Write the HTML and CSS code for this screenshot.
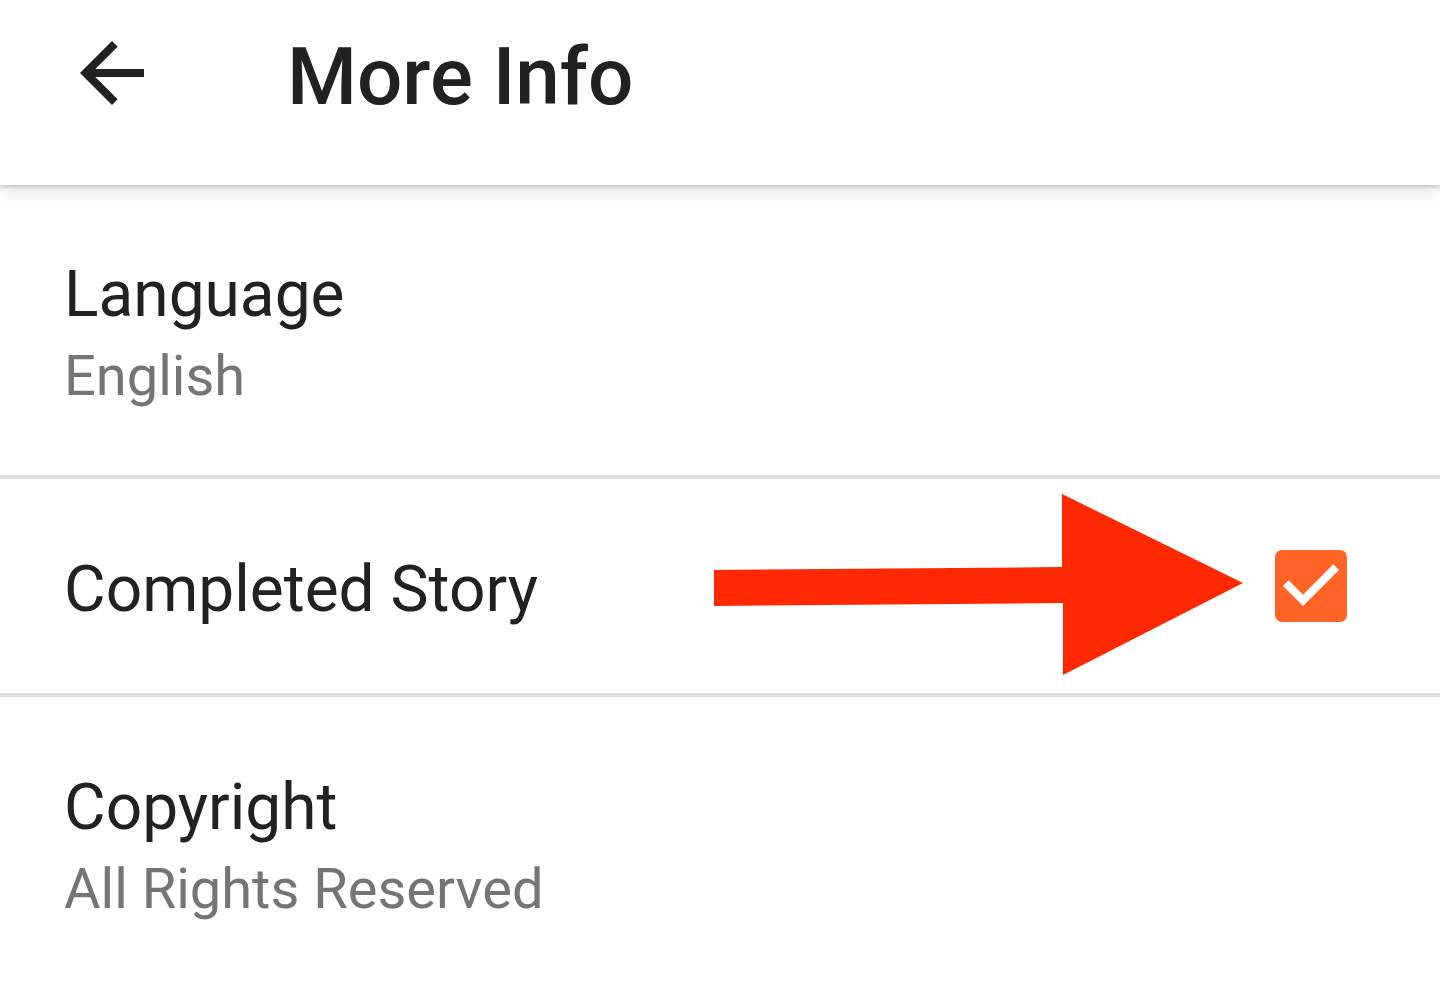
FILE: index.html
```html
<!DOCTYPE html>
<html lang="en">
<head>
<meta charset="utf-8">
<title>More Info</title>
<link rel="stylesheet" href="styles.css">
</head>
<body>
<div class="page">
  <header class="toolbar">
    <svg class="back-icon" viewBox="0 0 24 24" width="96" height="96" aria-hidden="true">
      <path d="M20 11H7.83l5.59-5.59L12 4l-8 8 8 8 1.41-1.41L7.83 13H20v-2z" fill="#212121"/>
    </svg>
    <h1 class="toolbar-title">More Info</h1>
  </header>

  <section class="row">
    <div class="row-text">
      <div class="row-title">Language</div>
      <div class="row-sub">English</div>
    </div>
  </section>
  <div class="divider"></div>

  <section class="row row-check">
    <div class="row-title">Completed Story</div>
    <div class="checkbox">
      <svg viewBox="0 0 72 72" width="72" height="72" aria-hidden="true">
        <path d="M28 56 8 36l5.64-5.64L28 44.68l30.36-30.36L64 20z" fill="#ffffff"/>
      </svg>
    </div>
  </section>
  <div class="divider"></div>

  <section class="row">
    <div class="row-text">
      <div class="row-title">Copyright</div>
      <div class="row-sub">All Rights Reserved</div>
    </div>
  </section>

  <svg class="annotation" viewBox="0 0 1440 1005" width="1440" height="1005" aria-hidden="true">
    <polygon points="714,570 1062,567 1062,494 1243,583 1063,675 1063,603 714,606" fill="#ff2800"/>
  </svg>
</div>
</body>
</html>
```

FILE: styles.css
```css
html, body {
  margin: 0;
  padding: 0;
  background: #ffffff;
}

body {
  width: 1440px;
  height: 1005px;
  overflow: hidden;
  font-family: Roboto, "Liberation Sans", sans-serif;
  color: #212121;
}

.page {
  position: relative;
  width: 1440px;
  height: 1005px;
  background: #ffffff;
}

.toolbar {
  position: relative;
  z-index: 2;
  height: 185px;
  box-sizing: border-box;
  display: flex;
  align-items: flex-start;
  background: #ffffff;
  box-shadow: 0 2px 4px rgba(0, 0, 0, 0.18), 0 6px 18px rgba(0, 0, 0, 0.1);
}

.back-icon {
  display: block;
  flex: none;
  margin: 25px 0 0 64px;
}

.toolbar-title {
  margin: 30px 0 0 127px;
  font-size: 80px;
  line-height: 94px;
  font-weight: 500;
  color: #212121;
}

.row {
  padding: 72px 64px 66px;
}

.row + .divider + .row {
  padding-top: 73px;
}

.row-title {
  font-size: 64px;
  line-height: 75px;
  color: #212121;
}

.row-sub {
  margin-top: 11px;
  font-size: 56px;
  line-height: 66px;
  color: #757575;
}

.row-check {
  display: flex;
  align-items: center;
  justify-content: space-between;
  padding: 73px 93px 66px 64px;
}

.checkbox {
  width: 72px;
  height: 72px;
  margin: -4px 0 3px;
  border-radius: 7px;
  background: #ff6426;
}

.checkbox svg {
  display: block;
}

.divider {
  height: 4px;
  background: #e0e0e0;
}

.annotation {
  position: absolute;
  left: 0;
  top: 0;
  pointer-events: none;
}
```
